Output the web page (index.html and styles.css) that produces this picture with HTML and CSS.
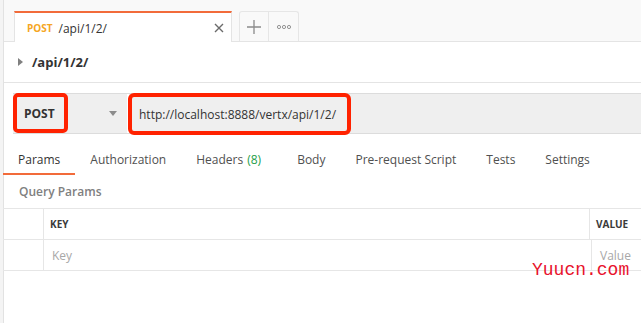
FILE: index.html
```html
<!DOCTYPE html>
<html lang="en">
<head>
    <meta charset="UTF-8">
    <meta name="viewport" content="width=device-width, initial-scale=1.0">
    <title>/api/1/2/</title>
    <link rel="stylesheet" href="styles.css">
</head>
<body>
    <div class="app">
        <div class="sidebar"></div>
        <div class="main">
            <div class="tabbar">
                <div class="tab active">
                    <span class="tab-method">POST</span>
                    <span class="tab-name">/api/1/2/</span>
                    <svg class="tab-close" width="10" height="10" viewBox="0 0 10 10">
                        <path d="M1 1 L9 9 M9 1 L1 9" stroke="#6b6b6b" stroke-width="1.4" fill="none"/>
                    </svg>
                </div>
                <div class="tab-btn">
                    <svg width="14" height="14" viewBox="0 0 14 14">
                        <path d="M7 0 V14 M0 7 H14" stroke="#8a8a8a" stroke-width="1.3" fill="none"/>
                    </svg>
                </div>
                <div class="tab-btn">
                    <svg width="14" height="6" viewBox="0 0 14 6">
                        <circle cx="2" cy="3" r="1.6" stroke="#8a8a8a" stroke-width="0.9" fill="none"/>
                        <circle cx="7" cy="3" r="1.6" stroke="#8a8a8a" stroke-width="0.9" fill="none"/>
                        <circle cx="12" cy="3" r="1.6" stroke="#8a8a8a" stroke-width="0.9" fill="none"/>
                    </svg>
                </div>
            </div>

            <div class="crumb">
                <svg width="6" height="8" viewBox="0 0 6 8">
                    <path d="M0 0 L5 4 L0 8 Z" fill="#808080"/>
                </svg>
                <span>/api/1/2/</span>
            </div>

            <div class="url-bar">
                <div class="method-select">
                    <span class="method-box">POST</span>
                    <svg class="caret" width="8" height="5" viewBox="0 0 8 5">
                        <path d="M0 0 H8 L4 5 Z" fill="#8c8c8c"/>
                    </svg>
                </div>
                <div class="url-input">
                    <span class="url-box">http://localhost:8888/vertx/api/1/2/</span>
                </div>
            </div>

            <nav class="req-tabs">
                <span class="req-tab current">Params</span>
                <span class="req-tab">Authorization</span>
                <span class="req-tab headers">Headers <em class="count">(8)</em></span>
                <span class="req-tab">Body</span>
                <span class="req-tab">Pre-request Script</span>
                <span class="req-tab">Tests</span>
                <span class="req-tab">Settings</span>
            </nav>

            <div class="section-title">Query Params</div>

            <div class="params-table">
                <div class="row head">
                    <div class="cell check"></div>
                    <div class="cell key">KEY</div>
                    <div class="cell value">VALUE</div>
                </div>
                <div class="row">
                    <div class="cell check"></div>
                    <div class="cell key placeholder">Key</div>
                    <div class="cell value placeholder">Value</div>
                </div>
            </div>
        </div>
        <div class="watermark">Yuucn.com</div>
    </div>
</body>
</html>
```

FILE: styles.css
```css
body {
    margin: 0;
    padding: 0;
    font-family: "Open Sans", "Liberation Sans", sans-serif;
    background-color: #fff;
    color: #333;
    overflow: hidden;
}

.app {
    position: relative;
    display: flex;
    height: 323px;
}

.sidebar {
    width: 3px;
    flex-shrink: 0;
    background-color: #f4f4f4;
    border-right: 1px solid #e2e2e2;
}

.main {
    flex: 1;
    min-width: 0;
}

/* top tabs */
.tabbar {
    display: flex;
    align-items: flex-end;
    height: 41px;
    padding-left: 10px;
    background-color: #f9f9f9;
    border-bottom: 1px solid #e4e4e4;
}

.tab {
    display: flex;
    align-items: center;
    box-sizing: border-box;
    height: 31px;
    margin-bottom: -1px;
    border: 1px solid #e4e4e4;
    border-bottom: none;
}

.tab.active {
    width: 218px;
    height: 31px;
    padding: 1px 7px 0 12px;
    background-color: #fff;
    border-top: 2px solid #f26b3a;
    border-left: 1px solid #e4e4e4;
}

.tab-method {
    font-size: 10px;
    font-weight: 700;
    color: #f5a623;
    margin-right: 6px;
}

.tab-name {
    font-size: 12px;
    color: #333;
    flex: 1;
}

.tab-btn {
    display: flex;
    align-items: center;
    justify-content: center;
    box-sizing: border-box;
    width: 30px;
    height: 30px;
    background-color: #f9f9f9;
    border: 1px solid #e6e6e6;
    border-bottom: none;
}

.tab.active + .tab-btn {
    margin-left: 7px;
    border-radius: 3px 0 0 0;
}

.tab-btn + .tab-btn {
    border-left: none;
    border-radius: 0 3px 0 0;
}

/* breadcrumb */
.crumb {
    display: flex;
    align-items: center;
    height: 40px;
    padding-left: 14px;
    border-bottom: 1px solid #e4e4e4;
    font-size: 13px;
    font-weight: 700;
    color: #333;
}

.crumb svg {
    margin-right: 8px;
}

/* url bar */
.url-bar {
    display: flex;
    height: 39px;
    margin-top: 10px;
    margin-left: 9px;
    background-color: #efefef;
    border-top: 1px solid #dcdcdc;
    border-bottom: 1px solid #dcdcdc;
}

.method-select {
    display: flex;
    align-items: center;
    width: 114px;
    border-right: 2px solid #fff;
}

.method-box {
    display: flex;
    align-items: center;
    box-sizing: border-box;
    width: 55px;
    height: 40px;
    margin-top: -1px;
    padding-left: 7px;
    border: 4px solid #ff2200;
    border-radius: 5px;
    font-size: 12px;
    font-weight: 700;
    color: #333;
}

.caret {
    margin-left: 41px;
}

.url-input {
    display: flex;
    align-items: center;
    flex: 1;
}

.url-box {
    display: flex;
    align-items: center;
    box-sizing: border-box;
    width: 223px;
    height: 42px;
    margin-top: 1px;
    margin-left: -1px;
    padding-left: 7px;
    border: 4px solid #ff2200;
    border-radius: 6px;
    font-size: 12px;
    color: #333;
}

/* request tabs */
.req-tabs {
    display: flex;
    height: 41px;
    margin-left: -1px;
}

.req-tab {
    display: flex;
    align-items: flex-end;
    padding: 0 15px 5px;
    font-size: 12px;
    line-height: 16px;
    color: #505050;
    border-bottom: 2px solid transparent;
    white-space: nowrap;
}

.req-tab.headers {
    padding-right: 21px;
}

.req-tab.current {
    color: #333;
    border-bottom-color: #f26b3a;
}

.count {
    font-style: normal;
    color: #26a04b;
    margin-left: 4px;
}

.section-title {
    height: 33px;
    line-height: 34px;
    padding-left: 15px;
    font-size: 12px;
    font-weight: 600;
    color: #808080;
}

/* params table */
.params-table {
    border-top: 1px solid #e6e6e6;
    margin-left: -1px;
}

.row {
    display: flex;
    height: 30px;
    border-bottom: 1px solid #e6e6e6;
}

.cell {
    display: flex;
    align-items: center;
}

.cell.check {
    width: 40px;
    border-right: 1px solid #e6e6e6;
}

.cell.key {
    width: 539px;
    padding-left: 6px;
    border-right: 1px solid #e6e6e6;
}

.cell.value {
    padding-left: 6px;
}

.head .cell {
    font-size: 10px;
    font-weight: 700;
    color: #3a3a3a;
}

.placeholder {
    font-size: 12px;
    color: #a8a8a8;
}

.cell.key.placeholder,
.cell.value.placeholder {
    padding-left: 8px;
}

.watermark {
    position: absolute;
    left: 532px;
    top: 260px;
    font-family: "Liberation Mono", monospace;
    font-size: 18px;
    color: #e8122c;
}
```
